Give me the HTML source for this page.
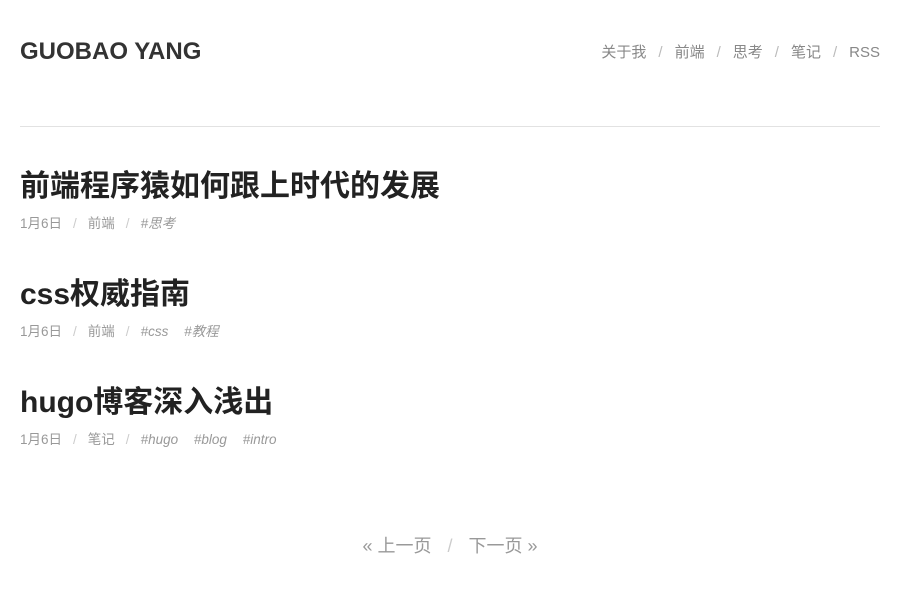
<!DOCTYPE html>
<html><head><meta charset="utf-8"><style>
body{margin:0;background:#fff;font-family:"Liberation Sans","Noto Sans CJK SC",sans-serif;width:900px;height:600px;overflow:hidden;position:relative}
.logo{position:absolute;left:20px;top:37px;font-size:24px;font-weight:bold;color:#333;line-height:30px}
.nav{position:absolute;right:20px;top:43px;font-size:15px;color:#888;line-height:20px}
.nav .s{color:#bbb;margin:0 12px}
hr{position:absolute;left:20px;top:126px;width:860px;margin:0;border:0;border-top:1px solid #e2e2e2}
.t{position:absolute;left:20px;font-size:30px;font-weight:bold;color:#222;line-height:36px;margin:0}
.m{position:absolute;left:20px;font-size:13.5px;color:#999;line-height:18px}
.m .s{color:#ccc;margin:0 11px}
.m i{margin-right:12px}
.pg{position:absolute;left:0;width:900px;text-align:center;top:535px;font-size:18px;color:#999;line-height:22px}
.pg .s{color:#ccc;margin:0 16px}
</style></head><body>
<div class="logo">GUOBAO YANG</div>
<div class="nav">关于我<span class="s">/</span>前端<span class="s">/</span>思考<span class="s">/</span>笔记<span class="s">/</span>RSS</div>
<hr>
<div class="t" style="top:169px">前端程序猿如何跟上时代的发展</div>
<div class="m" style="top:215px">1月6日<span class="s">/</span>前端<span class="s">/</span><i>#思考</i></div>
<div class="t" style="top:277px">css权威指南</div>
<div class="m" style="top:323px">1月6日<span class="s">/</span>前端<span class="s">/</span><i>#css</i> <i>#教程</i></div>
<div class="t" style="top:385px">hugo博客深入浅出</div>
<div class="m" style="top:431px">1月6日<span class="s">/</span>笔记<span class="s">/</span><i>#hugo</i> <i>#blog</i> <i>#intro</i></div>
<div class="pg">« 上一页<span class="s">/</span>下一页 »</div>
</body></html>
